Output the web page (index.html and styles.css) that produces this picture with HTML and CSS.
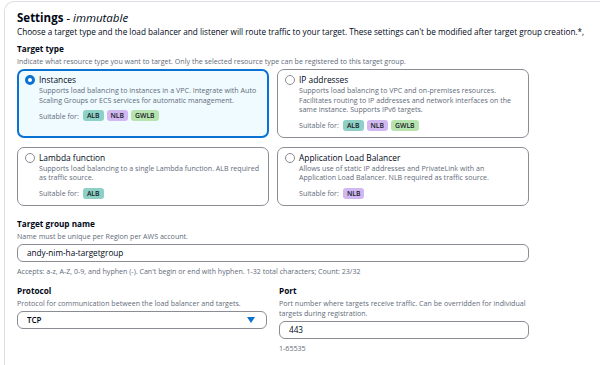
FILE: index.html
```html
<!DOCTYPE html>
<html lang="en">
<head>
  <meta charset="UTF-8" />
  <title>Create target group</title>
  <meta name="viewport" content="width=device-width, initial-scale=1.0" />
  <link rel="stylesheet" href="styles.css">
</head>
<body>

  <div class="card">
    <h2 class="card-title">Settings <span class="card-title-sub">- immutable</span></h2>
    <p class="card-desc">Choose a target type and the load balancer and listener will route traffic to your target. These settings can't be modified after target group creation.*,</p>

    <div class="fields">
      <div class="field">
        <div class="field-label">Target type</div>
        <div class="field-hint">Indicate what resource type you want to target. Only the selected resource type can be registered to this target group.</div>

        <div class="tiles">
          <div class="tile selected">
            <span class="radio checked"></span>
            <div class="tile-body">
              <div class="tile-title">Instances</div>
              <div class="tile-desc">Supports load balancing to instances in a VPC. Integrate with Auto Scaling Groups or ECS services for automatic management.</div>
              <div class="suitable">
                <span>Suitable for:</span>
                <span class="badge alb">ALB</span>
                <span class="badge nlb">NLB</span>
                <span class="badge gwlb">GWLB</span>
              </div>
            </div>
          </div>

          <div class="tile">
            <span class="radio"></span>
            <div class="tile-body">
              <div class="tile-title">IP addresses</div>
              <div class="tile-desc">Supports load balancing to VPC and on-premises resources. Facilitates routing to IP addresses and network interfaces on the same instance. Supports IPv6 targets.</div>
              <div class="suitable">
                <span>Suitable for:</span>
                <span class="badge alb">ALB</span>
                <span class="badge nlb">NLB</span>
                <span class="badge gwlb">GWLB</span>
              </div>
            </div>
          </div>

          <div class="tile">
            <span class="radio"></span>
            <div class="tile-body">
              <div class="tile-title">Lambda function</div>
              <div class="tile-desc">Supports load balancing to a single Lambda function. ALB required as traffic source.</div>
              <div class="suitable">
                <span>Suitable for:</span>
                <span class="badge alb">ALB</span>
              </div>
            </div>
          </div>

          <div class="tile">
            <span class="radio"></span>
            <div class="tile-body">
              <div class="tile-title">Application Load Balancer</div>
              <div class="tile-desc">Allows use of static IP addresses and PrivateLink with an Application Load Balancer. NLB required as traffic source.</div>
              <div class="suitable">
                <span>Suitable for:</span>
                <span class="badge nlb">NLB</span>
              </div>
            </div>
          </div>
        </div>
      </div>

      <div class="field name-field">
        <div class="field-label">Target group name</div>
        <div class="field-hint">Name must be unique per Region per AWS account.</div>
        <input type="text" class="text-input" value="andy-nim-ha-targetgroup" />
        <div class="field-constraint">Accepts: a-z, A-Z, 0-9, and hyphen (-). Can't begin or end with hyphen. 1-32 total characters; Count: 23/32</div>
      </div>

      <div class="field-row">
        <div class="field">
          <div class="field-label">Protocol</div>
          <div class="field-hint">Protocol for communication between the load balancer and targets.</div>
          <div class="select">
            <span>TCP</span>
            <svg class="caret" width="8" height="6" viewBox="0 0 8 6"><path d="M0 0 H8 L4 6 Z" fill="#0972d3"/></svg>
          </div>
        </div>
        <div class="field">
          <div class="field-label">Port</div>
          <div class="field-hint">Port number where targets receive traffic. Can be overridden for individual targets during registration.</div>
          <input type="text" class="text-input" value="443" />
          <div class="field-constraint">1-65535</div>
        </div>
      </div>
    </div>
  </div>

</body>
</html>
```

FILE: styles.css
```css
body {
  margin: 0;
  background-color: #fff;
  font-family: "Open Sans", "Noto Sans", sans-serif;
  color: #000716;
  overflow: hidden;
}

/* the card runs on past the right and bottom of the window */
.card {
  margin: 1px 0 0 4px;
  min-height: calc(100vh - 1px);
  border-top: 1px solid #dcdfe3;
  border-left: 1px solid #dcdfe3;
  border-top-left-radius: 10px;
  padding: 8px 0 0 12px;
  box-sizing: border-box;
}

.card-title {
  margin: 0;
  font-size: 11.5px;
  line-height: 16px;
  font-weight: bold;
}

.card-title-sub {
  font-weight: normal;
  font-style: italic;
}

.card-desc {
  margin: 0;
  font-size: 8.2px;
  line-height: 11px;
  white-space: nowrap;
}

.fields {
  width: 512px;
}

.field-label {
  font-size: 8.2px;
  line-height: 10px;
  font-weight: bold;
  margin-top: 7px;
}

.field-hint {
  font-size: 7.1px;
  line-height: 10px;
  color: #5f6b7a;
  margin-top: 2px;
}

.tiles {
  display: grid;
  grid-template-columns: 1fr 1fr;
  gap: 9px 8px;
  margin-top: 3px;
}

.tile {
  display: flex;
  gap: 4px;
  border: 1px solid #8c8c94;
  border-radius: 7px;
  padding: 4px 5px 6px 7px;
}

.tile.selected {
  border: 2px solid #0972d3;
  background-color: #f0fbff;
  padding: 3px 4px 5px 6px;
}

.radio {
  flex: none;
  width: 10px;
  height: 10px;
  margin-top: 1px;
  border: 1px solid #8c8c94;
  border-radius: 50%;
  box-sizing: border-box;
  background: #fff;
}

.radio.checked {
  border: 3px solid #0972d3;
}

.tile-title {
  font-size: 8.4px;
  line-height: 12px;
}

.tile-desc {
  font-size: 7.1px;
  line-height: 9.5px;
  color: #5f6b7a;
}

.suitable {
  display: flex;
  align-items: center;
  gap: 3px;
  margin-top: 5px;
  font-size: 7.1px;
  color: #5f6b7a;
}

.suitable span:first-child {
  margin-right: 1px;
}

.badge {
  display: inline-block;
  height: 11px;
  line-height: 11px;
  padding: 0 4px;
  border-radius: 3px;
  color: #16191f;
  font-weight: 600;
  font-size: 6.8px;
}

.badge.alb { background-color: #8dd0c6; }
.badge.nlb { background-color: #d2b8f2; }
.badge.gwlb { background-color: #b7e4ae; }

.name-field .field-label {
  margin-top: 13px;
}

.text-input {
  display: block;
  width: 100%;
  height: 18px;
  margin-top: 3px;
  padding: 0 9px;
  box-sizing: border-box;
  border: 1px solid #8c8c94;
  border-radius: 6px;
  font-family: inherit;
  font-size: 8.2px;
  font-weight: 500;
  color: #000716;
}

.field-constraint {
  font-size: 7.1px;
  line-height: 10px;
  color: #5f6b7a;
  margin-top: 4px;
}

.field-row {
  display: grid;
  grid-template-columns: 1fr 1fr;
  gap: 12px;
  margin-top: 10px;
}

.field-row .field-label {
  margin-top: 0;
}

.select {
  display: flex;
  align-items: center;
  justify-content: space-between;
  height: 18px;
  margin-top: 3px;
  padding: 0 11px 0 9px;
  box-sizing: border-box;
  border: 1px solid #8c8c94;
  border-radius: 6px;
  font-size: 8px;
  font-weight: 600;
}
```
